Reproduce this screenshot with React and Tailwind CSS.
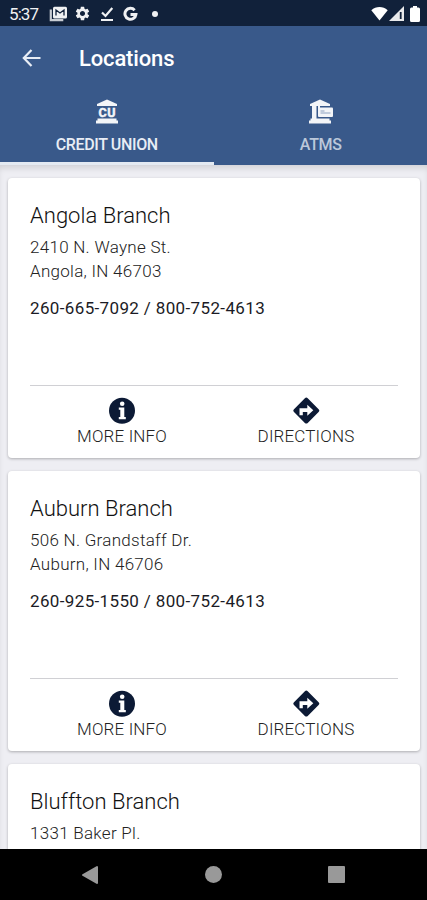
import { MdSettings } from "react-icons/md";

const branches = [
  {
    name: "Angola Branch",
    street: "2410 N. Wayne St.",
    city: "Angola, IN 46703",
    phone: "260-665-7092 / 800-752-4613",
  },
  {
    name: "Auburn Branch",
    street: "506 N. Grandstaff Dr.",
    city: "Auburn, IN 46706",
    phone: "260-925-1550 / 800-752-4613",
  },
  {
    name: "Bluffton Branch",
    street: "1331 Baker Pl.",
  },
];

function StatusBar() {
  return (
    <div className="flex h-[26px] shrink-0 items-center justify-between bg-[#11213a] pl-[9px] pr-[7px] pt-px text-[#f0f1f3]">
      <div className="flex items-center">
        <span className="w-[40px] text-[17px] leading-[26px] tracking-[-0.9px]">5:37</span>
        <svg className="h-[16px] w-[19px]" viewBox="0 0 19 16">
          <path d="M1.8 3.500v10.700h12.500" fill="none" stroke="#c9cdd3" strokeWidth="2.200" />
          <rect x="4" y="0.800" width="14" height="11.700" rx="1.500" fill="#f0f1f3" />
          <path d="M7 9.500V4l4 3 4-3v5.500" fill="none" stroke="#11213a" strokeWidth="1.300" />
        </svg>
        <MdSettings className="ml-[6px] h-[17px] w-[17px]" />
        <svg className="ml-[9px] h-[16px] w-[14px]" viewBox="0 0 14 16" fill="none" stroke="currentColor">
          <path d="M2 6.500l3.500 3.500L12.300 2" strokeWidth="2.200" />
          <path d="M1 14h12" strokeWidth="2" />
        </svg>
        <svg className="ml-[9px] h-[16px] w-[15px]" viewBox="0 0 15 16" fill="none" stroke="currentColor" strokeWidth="3">
          <path d="M11.600 4.200A5.500 5.500 0 1 0 12.900 8.500H7.500" />
        </svg>
        <span className="ml-[14px] h-[6px] w-[6px] rounded-full bg-[#f0f1f3]" />
      </div>
      <div className="flex items-center">
        <svg className="h-[15px] w-[17px]" viewBox="0 0 17 15">
          <path d="M8.500 14.500L0.300 4.200C5 0 12 0 16.700 4.200z" fill="#fff" />
        </svg>
        <svg className="ml-[1px] h-[15px] w-[15px]" viewBox="0 0 15 15">
          <path d="M0 15L15 0v15z" fill="#e9eaec" />
          <path d="M10.800 6v7h1.800V6z" fill="#11213a" />
        </svg>
        <svg className="ml-[6px] h-[16px] w-[10px]" viewBox="0 0 10 16">
          <path d="M3 0h4v1.600h1.500q1.500 0 1.500 1.500v11.400q0 1.500-1.500 1.500h-7q-1.500 0-1.500-1.500V3.100q0-1.500 1.500-1.500H3z" fill="#fff" />
        </svg>
      </div>
    </div>
  );
}

function BackArrow() {
  return (
    <svg
      className="h-[18px] w-[19px]"
      viewBox="0 0 19 18"
      fill="none"
      stroke="#e8edf5"
      strokeWidth="2.200"
    >
      <path d="M9.500 1L1.800 9l7.700 8M2 9h16.500" />
    </svg>
  );
}

function CreditUnionIcon() {
  return (
    <svg className="h-[25px] w-[24px]" viewBox="0 0 24 25" fill="#f3f5f8">
      <path d="M12 0.500L22 5v2H2V5z" />
      <path d="M2.500 19.500h19v2H23V24.500H1v-3h1.500z" />
      <text
        x="12.200"
        y="17.500"
        textAnchor="middle"
        stroke="#f3f5f8"
        strokeWidth="0.500"
        className="font-['Roboto'] text-[12.5px] font-bold tracking-[0.5px]"
      >
        CU
      </text>
    </svg>
  );
}

function AtmIcon() {
  return (
    <svg className="ml-[2px] h-[25px] w-[26px]" viewBox="0 0 26 25" fill="#f3f5f8">
      <path d="M12 0.500L22 5v2H2V5z" />
      <path d="M4 7h4.500v13H4z" />
      <rect x="10" y="8.500" width="15" height="9.500" rx="1" />
      <path d="M10 7h2v3h-2z" />
      <path d="M12.500 12h4M12.500 14h10" stroke="#8ea2c0" strokeWidth="1" />
      <path d="M2.500 19.500h19v2H23V24.500H1v-3h1.500z" />
    </svg>
  );
}

function InfoIcon() {
  return (
    <svg className="h-[27px] w-[27px]" viewBox="0 0 27 27">
      <circle cx="13" cy="13.800" r="13" fill="#0c1a35" />
      <circle cx="13.200" cy="6.700" r="2.300" fill="#fff" />
      <path d="M9.800 10.500h5.500v9.500h1.500v2.200H9.800V20h1.500v-7.300H9.800z" fill="#fff" />
    </svg>
  );
}

function DirectionsIcon() {
  return (
    <svg className="h-[27px] w-[27px]" viewBox="0 0 27 27">
      <rect
        x="3.600"
        y="3.900"
        width="19.400"
        height="19.400"
        rx="2"
        transform="rotate(45 13.300 13.600)"
        fill="#0c1a35"
      />
      <path d="M6.500 18.300v-7h7.800V7.800l6 5.500-6 5.500v-3.900H9.800v3.400z" fill="#fff" />
    </svg>
  );
}

function Header() {
  return (
    <header className="flex h-[139px] shrink-0 flex-col bg-[#39598a] text-white">
      <div className="flex h-[64px] items-center pl-[22px]">
        <BackArrow />
        <h1 className="ml-[38px] text-[22px] font-medium tracking-[-0.15px]">Locations</h1>
      </div>
      <div className="grid flex-1 grid-cols-2">
        <div className="flex flex-col items-center border-b-[3px] border-[#e4eaf2] pt-[9px]">
          <CreditUnionIcon />
          <span className="mt-[11px] text-[16px] font-medium leading-[20px] tracking-[-0.35px] text-[#e8edf5]">
            CREDIT UNION
          </span>
        </div>
        <div className="flex flex-col items-center pt-[9px]">
          <AtmIcon />
          <span className="ml-px mt-[11px] text-[16px] font-medium leading-[20px] tracking-[-0.3px] text-[#bcc8da]">
            ATMS
          </span>
        </div>
      </div>
    </header>
  );
}

function BranchCard({ branch }) {
  return (
    <div className="flex h-[280px] shrink-0 flex-col rounded-[4px] bg-white px-[22px] shadow-[0_1px_3px_rgba(0,0,0,0.28)]">
      <h2 className="mt-[24px] text-[22px] font-light leading-[28px] tracking-[0.02px] text-[#111]">{branch.name}</h2>
      <p className="mt-[6px] text-[17px] font-light leading-[23.500px] tracking-[0.28px] text-[#222]">
        {branch.street}
        <br />
        {branch.city}
      </p>
      {branch.phone && (
        <>
          <p className="mt-[12px] text-[17px] leading-[26px] tracking-[0.36px] text-[#1b1b25]">{branch.phone}</p>
          <div className="mt-auto grid h-[73px] grid-cols-2 border-t-[1px] border-[#d0d0d4]">
            <div className="flex flex-col items-center pt-[11px] text-[#222]">
              <InfoIcon />
              <span className="mt-[2px] text-[17px] font-light leading-[20px] tracking-[0.15px]">MORE INFO</span>
            </div>
            <div className="flex flex-col items-center pt-[11px] text-[#222]">
              <DirectionsIcon />
              <span className="mt-[2px] text-[17px] font-light leading-[20px] tracking-[0.15px]">DIRECTIONS</span>
            </div>
          </div>
        </>
      )}
    </div>
  );
}

function NavBar() {
  return (
    <div className="flex h-[51px] shrink-0 items-center bg-black pl-[81px]">
      <svg className="h-[20px] w-[18px]" viewBox="0 0 18 20">
        <path d="M16 2v16L2 10z" fill="#999" stroke="#999" strokeWidth="2" strokeLinejoin="round" />
      </svg>
      <span className="ml-[106px] h-[17px] w-[17px] rounded-full bg-[#999]" />
      <span className="ml-[106px] h-[17px] w-[17px] rounded-[1px] bg-[#999]" />
    </div>
  );
}

export default function App() {
  return (
    <div className="flex h-[900px] w-[427px] flex-col overflow-hidden bg-[#eeeef3] font-['Roboto',sans-serif]">
      <StatusBar />
      <Header />
      <main className="flex min-h-0 flex-1 flex-col gap-[13px] overflow-hidden pl-[8px] pr-[7px] pt-[13px] shadow-[inset_0_5px_6px_-2px_rgba(0,0,0,0.12)]">
        {branches.map((branch) => (
          <BranchCard key={branch.name} branch={branch} />
        ))}
      </main>
      <NavBar />
    </div>
  );
}
